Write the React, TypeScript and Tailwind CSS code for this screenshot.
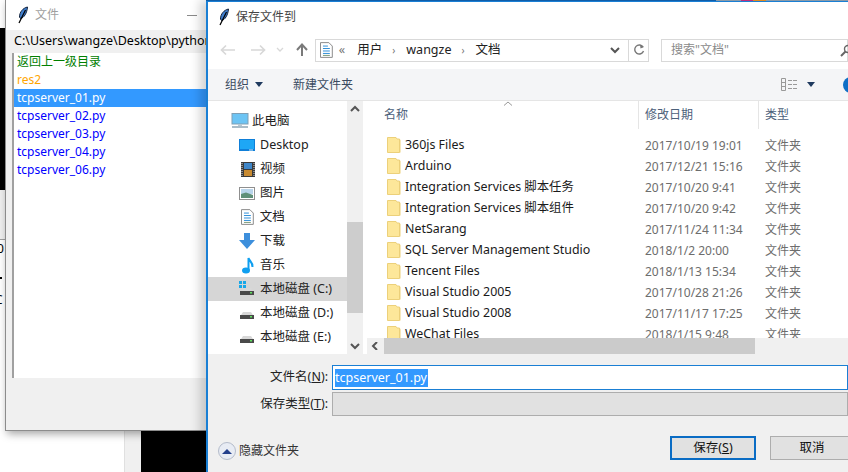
const uiFont = "font-['Noto_Sans','Noto_Sans_CJK_SC',sans-serif]";

function Feather() {
  return (
    <svg width="12" height="18" viewBox="0 0 12 18" className="shrink-0">
      <path d="M10.5 1 C6 2 2.5 6 2.5 11 L3.5 12.5 C7 12 10 7 10.5 1 Z" fill="#3f7fd0" stroke="#10203a" strokeWidth="1" />
      <path d="M8.5 4 L2 17" stroke="#000" strokeWidth="1.2" fill="none" />
    </svg>
  );
}

function Folder() {
  return (
    <svg width="14" height="16" viewBox="0 0 14 16" className="shrink-0">
      <path d="M0.5 0.5 H9 L10 2 H12.5 V15.5 H0.5 Z" fill="#fde79a" stroke="#ecd07a" />
      <path d="M12.5 2 L13.5 3 V15.5 H12.5 Z" fill="#ecd07a" />
    </svg>
  );
}

function DocIcon({ size = 16 }: { size?: number }) {
  return (
    <svg width={size * 0.8} height={size} viewBox="0 0 13 16" className="shrink-0">
      <path d="M0.5 0.5 H9 L12.5 4 V15.5 H0.5 Z" fill="#fff" stroke="#8a8a8a" />
      <path d="M3 4 H8 M3 6.5 H10 M3 9 H10 M3 11.5 H10" stroke="#2f8fd8" strokeWidth="1" />
      <path d="M3 13.5 H10" stroke="#7a9a7a" strokeWidth="1" />
    </svg>
  );
}

function DriveIcon({ win }: { win?: boolean }) {
  return (
    <svg width="16" height="16" viewBox="0 0 16 16" className="shrink-0">
      {win && (
        <g fill="#18a8e8">
          <rect x="0" y="0" width="3" height="3" />
          <rect x="4" y="0" width="3" height="3" />
          <rect x="0" y="4" width="3" height="3" />
          <rect x="4" y="4" width="3" height="3" />
        </g>
      )}
      <path d="M2 10 L4 7 H12 L14 10 Z" fill="#d8d8d8" />
      <rect x="1" y="10" width="14" height="4" fill="#4a4a4a" />
      <rect x="11" y="11" width="2" height="1.5" fill="#5fe05f" />
    </svg>
  );
}

function NavIcon({ name }: { name: string }) {
  if (name === "pc")
    return (
      <svg width="18" height="16" viewBox="0 0 18 16" className="shrink-0">
        <rect x="1" y="0.5" width="16" height="10.5" fill="#6cc4f4" stroke="#7f9fb5" />
        <path d="M7 11 H11 V13 H7 Z" fill="#b8c8d2" />
        <path d="M1 14 H17" stroke="#a9bcc8" strokeWidth="2" />
      </svg>
    );
  if (name === "desktop")
    return (
      <svg width="16" height="12" viewBox="0 0 16 12" className="shrink-0">
        <rect width="16" height="12" fill="#0f7fd8" />
        <rect x="1" y="1" width="14" height="9" fill="#1ea7f5" />
        <rect x="10" y="10.5" width="4" height="1" fill="#cfe8fa" />
      </svg>
    );
  if (name === "video")
    return (
      <svg width="14" height="15" viewBox="0 0 14 15" className="shrink-0">
        <rect width="14" height="15" fill="#3a3a3a" />
        <rect x="3" y="1" width="8" height="6" fill="#3f86c8" />
        <rect x="3" y="8" width="8" height="6" fill="#c88a30" />
        <path d="M1 1 V14 M13 1 V14" stroke="#ddd" strokeDasharray="1 1" />
      </svg>
    );
  if (name === "image")
    return (
      <svg width="16" height="13" viewBox="0 0 16 13" className="shrink-0">
        <rect x="0.5" y="0.5" width="15" height="12" fill="#fff" stroke="#8f8f8f" />
        <rect x="2" y="2" width="12" height="5" fill="#b8d4ea" />
        <path d="M2 7 L7 5.5 L14 8 V11 H2 Z" fill="#5f8f78" />
      </svg>
    );
  if (name === "doc") return <DocIcon />;
  if (name === "down")
    return (
      <svg width="16" height="16" viewBox="0 0 16 16" className="shrink-0">
        <path d="M5 0 H11 V7 H16 L8 16 L0 7 H5 Z" fill="#3d8fdc" />
      </svg>
    );
  if (name === "music")
    return (
      <svg width="12" height="17" viewBox="0 0 12 17" className="shrink-0">
        <ellipse cx="4" cy="13.5" rx="4" ry="3" fill="#0f9ff0" />
        <path d="M6.5 13 V1 C7 4 11 5 10.5 10" stroke="#0f9ff0" strokeWidth="2" fill="none" />
      </svg>
    );
  return <DriveIcon win={name === "c"} />;
}

const navItems = [
  { icon: "pc", label: "此电脑", pad: "pl-[23px]", gap: "gap-[3px]" },
  { icon: "desktop", label: "Desktop", pad: "pl-[31px]", gap: "gap-[5px]" },
  { icon: "video", label: "视频", pad: "pl-[33px]", gap: "gap-[5px]" },
  { icon: "image", label: "图片", pad: "pl-[31px]", gap: "gap-[5px]" },
  { icon: "doc", label: "文档", pad: "pl-[33px]", gap: "gap-[6px]" },
  { icon: "down", label: "下载", pad: "pl-[31px]", gap: "gap-[5px]" },
  { icon: "music", label: "音乐", pad: "pl-[34px]", gap: "gap-[6px]" },
  { icon: "c", label: "本地磁盘 (C:)", pad: "pl-[31px]", gap: "gap-[5px]", active: true },
  { icon: "d", label: "本地磁盘 (D:)", pad: "pl-[31px]", gap: "gap-[5px]" },
  { icon: "e", label: "本地磁盘 (E:)", pad: "pl-[31px]", gap: "gap-[5px]" },
];

const files = [
  ["360js Files", "2017/10/19 19:01"],
  ["Arduino", "2017/12/21 15:16"],
  ["Integration Services 脚本任务", "2017/10/20 9:41"],
  ["Integration Services 脚本组件", "2017/10/20 9:42"],
  ["NetSarang", "2017/11/24 11:34"],
  ["SQL Server Management Studio", "2018/1/2 20:00"],
  ["Tencent Files", "2018/1/13 15:34"],
  ["Visual Studio 2005", "2017/10/28 21:26"],
  ["Visual Studio 2008", "2017/11/17 17:25"],
  ["WeChat Files", "2018/1/15 9:48"],
];

const pyFiles = ["tcpserver_02.py", "tcpserver_03.py", "tcpserver_04.py", "tcpserver_06.py"];

function BackWindow() {
  return (
    <div className="absolute left-[5px] top-0 w-[260px] h-[431px] flex flex-col bg-[#f0f0f0] border-l border-b border-[#8c8c8c] shadow-[2px_3px_8px_rgba(0,0,0,0.35)]">
      <div className="h-[30px] bg-white flex items-center pl-[11px]">
        <Feather />
        <span className="ml-[6px] text-[12px] text-[#a0a0a0]">文件</span>
        <span className="ml-[128px] w-[10px] h-px bg-[#8a8a8a]" />
      </div>
      <div className="h-[23px] flex items-center pl-[8px] text-[12.5px] text-black whitespace-nowrap overflow-hidden">
        C:\Users\wangze\Desktop\python
      </div>
      <div className="ml-[6px] h-[325px] bg-white border-l-2 border-[#a0a0a0] text-[12px] leading-[18px]">
        <div className="pl-[3px] text-[#008000]">返回上一级目录</div>
        <div className="pl-[3px] text-[#ffa500]">res2</div>
        <div className="pl-[3px] bg-[#3399ff] text-white">tcpserver_01.py</div>
        {pyFiles.map((f) => (
          <div key={f} className="pl-[3px] text-[#0000ff]">
            {f}
          </div>
        ))}
      </div>
    </div>
  );
}

function Chevron({ dir }: { dir: "up" | "down" | "left" | "right" }) {
  const d = { up: "M1 6 L5 2 L9 6", down: "M1 2 L5 6 L9 2", left: "M6 0 L2 4 L6 8", right: "M2 0 L6 4 L2 8" }[dir];
  return (
    <svg width="10" height="8" viewBox="0 0 10 8" className="shrink-0">
      <path d={d} stroke="#555" strokeWidth="2" fill="none" />
    </svg>
  );
}

function Caret() {
  return <span className="w-0 h-0 border-x-[4px] border-x-transparent border-t-[5px] border-t-[#1f3a5f]" />;
}

function AddressBar() {
  return (
    <div className="h-[38px] flex items-center shrink-0">
      <div className="w-[107px] flex items-center pl-[12px]">
        <svg width="16" height="12" viewBox="0 0 16 12">
          <path d="M15 6 H2 M6 1.5 L1.5 6 L6 10.5" stroke="#d8d8d8" strokeWidth="1.7" fill="none" />
        </svg>
        <svg width="16" height="12" viewBox="0 0 16 12" className="ml-[14px]">
          <path d="M1 6 H14 M10 1.5 L14.5 6 L10 10.5" stroke="#d8d8d8" strokeWidth="1.7" fill="none" />
        </svg>
        <svg width="8" height="6" viewBox="0 0 8 6" className="ml-[10px]">
          <path d="M1 1 L4 4 L7 1" stroke="#d8d8d8" strokeWidth="1.3" fill="none" />
        </svg>
        <svg width="14" height="14" viewBox="0 0 14 14" className="ml-[11px]">
          <path d="M7 13 V2 M2 7 L7 1.5 L12 7" stroke="#7a7a7a" strokeWidth="2" fill="none" />
        </svg>
      </div>
      <div className="w-[334px] h-[23px] border border-[#d9d9d9] flex items-center text-[12.5px] text-[#222]">
        <span className="ml-[4px] flex">
          <DocIcon />
        </span>
        <span className="ml-[6px] text-[#777]">«</span>
        <span className="ml-[12px]">用户</span>
        <span className="ml-[10px] text-[#777] text-[10px]">›</span>
        <span className="ml-[11px]">wangze</span>
        <span className="ml-[10px] text-[#777] text-[10px]">›</span>
        <span className="ml-[11px]">文档</span>
        <span className="ml-auto mr-[8px] flex">
          <Chevron dir="down" />
        </span>
        <span className="w-[20px] h-full border-l border-[#d9d9d9] flex items-center justify-center">
          <svg width="12" height="12" viewBox="0 0 12 12">
            <path d="M10 3 A4.5 4.5 0 1 0 10.5 7" stroke="#777" strokeWidth="1.4" fill="none" />
            <path d="M7 0.5 L7.5 4.5 L11 3 Z" fill="#777" />
          </svg>
        </span>
      </div>
      <div className="ml-[12px] flex-1 h-[23px] border border-[#d9d9d9] flex items-center pl-[9px] text-[12px] text-[#8a8a8a] relative">
        搜索"文档"
        <svg width="13" height="13" viewBox="0 0 13 13" className="absolute left-[178px] top-[4px]">
          <circle cx="8" cy="5" r="3.5" stroke="#666" strokeWidth="1.4" fill="none" />
          <path d="M5.5 7.5 L1 12" stroke="#666" strokeWidth="2" />
        </svg>
      </div>
    </div>
  );
}

function Toolbar() {
  return (
    <div className="h-[32px] shrink-0 bg-[#f4f5f7] border-b border-[#e5e5e5] flex items-center pl-[17px] text-[12px] text-[#3a4a5f] whitespace-nowrap overflow-hidden">
      <span className="shrink-0">组织</span>
      <span className="ml-[6px] flex shrink-0">
        <Caret />
      </span>
      <span className="ml-[30px] shrink-0">新建文件夹</span>
      <svg width="16" height="13" viewBox="0 0 16 13" className="ml-[428px] shrink-0">
        <path d="M0.5 0.5 H4.5 V12.5 H0.5 Z M0.5 4.5 H4.5 M0.5 8.5 H4.5" stroke="#999" fill="none" />
        <path d="M7 2.5 H11 M12 2.5 H16 M7 6.5 H11 M12 6.5 H16 M7 10.5 H11 M12 10.5 H16" stroke="#999" />
      </svg>
      <span className="ml-[10px] flex shrink-0">
        <Caret />
      </span>
      <span className="ml-[28px] w-[16px] h-[16px] rounded-full bg-[#0f6fc6] shrink-0" />
    </div>
  );
}

function NavPane() {
  return (
    <div className="w-[155px] flex shrink-0">
      <div className="w-[139px] pt-[8px]">
        {navItems.map((item) => (
          <div
            key={item.label}
            className={`h-[24px] flex items-center text-[12.5px] whitespace-nowrap ${item.pad} ${item.gap} ${item.active ? "bg-[#d6d6d6]" : ""} text-[#222]`}
          >
            <NavIcon name={item.icon} />
            <span>{item.label}</span>
          </div>
        ))}
      </div>
      <div className="w-[16px] bg-[#f0f0f0] flex flex-col items-center justify-between py-[4px] relative">
        <Chevron dir="up" />
        <div className="absolute left-0 top-[121px] w-full h-[91px] bg-[#cdcdcd]" />
        <Chevron dir="down" />
      </div>
    </div>
  );
}

function FileList() {
  return (
    <div className="flex-1 min-w-0 flex flex-col ml-[2px] relative">
      <div className="h-[28px] shrink-0 flex text-[12px] text-[#4c607a] relative">
        <div className="w-[274px] pl-[19px] flex items-center border-r border-[#e5e5e5]">名称</div>
        <div className="w-[120px] pl-[6px] flex items-center border-r border-[#e5e5e5]">修改日期</div>
        <div className="pl-[6px] flex items-center">类型</div>
        <svg width="10" height="5" viewBox="0 0 10 5" className="absolute left-[138px] top-0">
          <path d="M1 4.5 L5 1 L9 4.5" stroke="#999" fill="none" />
        </svg>
      </div>
      <div className="flex-1 overflow-hidden pt-[6px]">
        {files.map(([name, date]) => (
          <div key={name} className="h-[21px] flex items-center text-[12.4px] whitespace-nowrap">
            <div className="w-[280px] pl-[22px] flex items-center gap-[4px] text-[#1a1a1a]">
              <Folder />
              <span>{name}</span>
            </div>
            <div className="w-[120px] text-[12px] text-[#6d6d6d]">{date}</div>
            <div className="text-[12px] text-[#6d6d6d]">文件夹</div>
          </div>
        ))}
      </div>
      <div className="h-[16px] shrink-0 ml-[2px] bg-[#f0f0f0] flex items-center">
        <span className="w-[17px] flex justify-center">
          <Chevron dir="left" />
        </span>
        <div className="w-[371px] h-full bg-[#cbcbcb]" />
      </div>
    </div>
  );
}

function Dialog() {
  return (
    <div className="absolute left-[206px] top-0 w-[642px] h-[472px] flex flex-col bg-white border-l-2 border-t-2 border-[#1a7fd4] shadow-[-6px_0_10px_rgba(0,0,0,0.18)]">
      <div className="h-[29px] shrink-0 flex items-center pl-[10px]">
        <Feather />
        <span className="ml-[6px] text-[12px] text-[#444]">保存文件到</span>
      </div>
      <AddressBar />
      <Toolbar />
      <div className="flex h-[253px] shrink-0">
        <NavPane />
        <FileList />
      </div>
      <div className="flex-1 bg-[#f0f0f0] text-[12.5px] text-[#222]">
        <div className="pt-[11px] flex items-center h-[36px]">
          <span className="w-[120px] text-right whitespace-nowrap">
            文件名(<u>N</u>):
          </span>
          <div className="ml-[4px] flex-1 h-[25px] bg-white border border-[#1a7fd4] flex items-center pl-[2px]">
            <span className="bg-[#3399ff] text-white leading-[18px] pr-px">tcpserver_01.py</span>
          </div>
        </div>
        <div className="mt-[2px] flex items-center h-[24px]">
          <span className="w-[120px] text-right whitespace-nowrap">
            保存类型(<u>T</u>):
          </span>
          <div className="ml-[4px] flex-1 h-[24px] bg-[#e1e1e1] border border-[#adadad]" />
        </div>
        <div className="mt-[20px] pl-[10px] flex items-start">
          <span className="mt-[6px] w-[18px] h-[18px] shrink-0 rounded-full bg-[#e8ecf4] border border-[#b4bccb] flex items-center justify-center">
            <span className="w-0 h-0 border-x-[5px] border-x-transparent border-b-[5px] border-b-[#24408c]" />
          </span>
          <span className="mt-[6px] ml-[3px] text-[12px] leading-[18px] text-[#333] whitespace-nowrap">隐藏文件夹</span>
          <button className="ml-[371px] w-[86px] h-[24px] shrink-0 bg-[#e1e1e1] border-2 border-[#0a6cc4] text-[#111]">
            保存(<u>S</u>)
          </button>
          <button className="ml-[14px] w-[84px] h-[24px] shrink-0 bg-[#e1e1e1] border border-[#adadad] text-[#111]">取消</button>
        </div>
      </div>
    </div>
  );
}

export default function App() {
  return (
    <div className={`relative w-[848px] h-[472px] overflow-hidden bg-white ${uiFont}`}>
      {/* bits of the windows behind */}
      <div className="absolute left-0 top-[28px] w-[6px] h-[162px] bg-black" />
      <div className="absolute left-0 top-[190px] w-[6px] h-[50px] bg-[#f0f0f0] border-b border-[#a0a0a0]" />
      <div className="absolute left-[-3px] top-[240px] text-[12px] leading-[17px] text-black">0</div>
      <div className="absolute left-0 top-[277px] w-[2px] h-[2px] bg-black" />
      <div className="absolute left-[-5px] top-[291px] text-[12px] leading-[17px] text-black">C</div>
      <div className="absolute left-[124px] top-[430px] w-[17px] h-[42px] bg-[#f0f0f0] border-l border-[#e0e0e0]" />
      <div className="absolute left-[141px] top-[430px] w-[66px] h-[42px] bg-black" />
      <BackWindow />
      <Dialog />
      <div className="absolute left-[206px] top-0 w-[642px] h-px flex">
        <div className="w-[510px] bg-[#0f5da8]" />
        <div className="w-[25px] bg-[#8a9aa8]" />
        <div className="w-[12px] bg-[#c0307a]" />
        <div className="w-[13px] bg-[#e08a20]" />
        <div className="flex-1 bg-[#8a9aa8]" />
      </div>
    </div>
  );
}
